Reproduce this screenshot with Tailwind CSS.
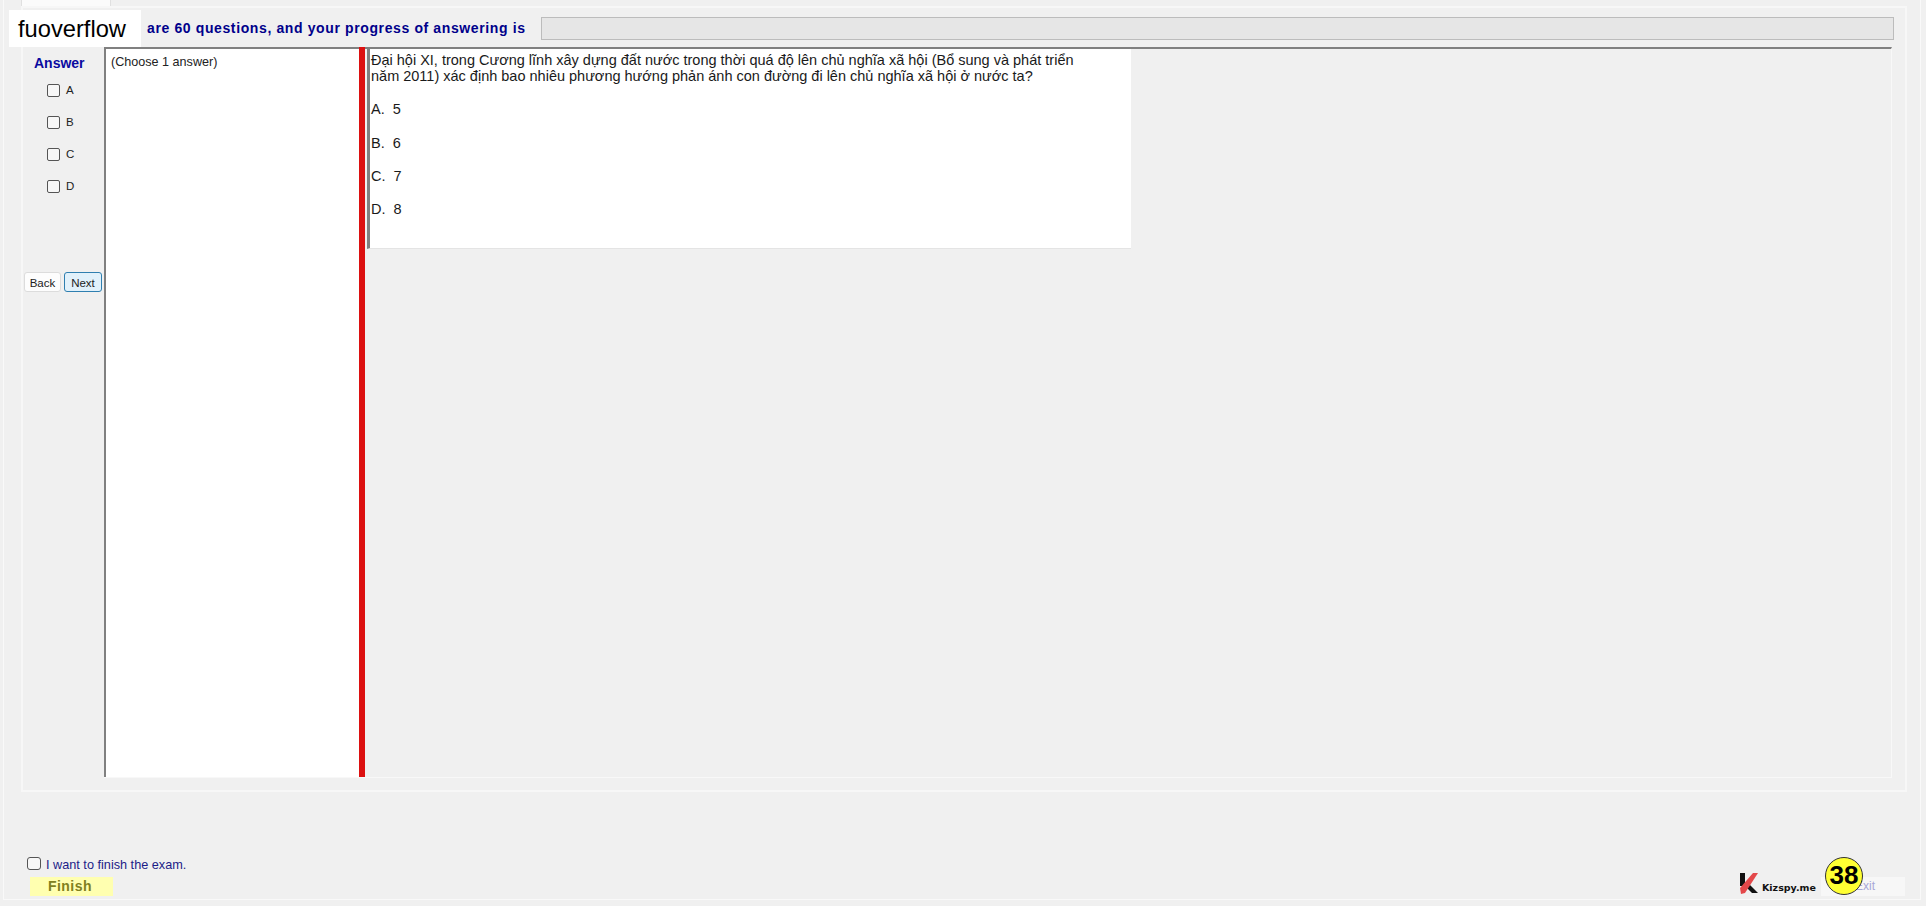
<!DOCTYPE html>
<html lang="vi">
<head>
  <meta charset="UTF-8">
  <title>Exam</title>
  <script src="https://cdn.jsdelivr.net/npm/@tailwindcss/browser@4"></script>
</head>
<body class="bg-[#f0f0f0] font-['Liberation_Sans',Arial,sans-serif] text-black overflow-hidden">
  <div class="relative w-[1926px] h-[906px]">
    <!-- window frame -->
    <div class="ml-[3px] w-[1918px] h-[900px] border-l border-r border-b border-[#f9f9f9] flex flex-col">
      <!-- tab strip -->
      <div class="h-[6px] pl-[17px] flex">
        <div class="w-[90px] h-[6px] bg-[#fbfbfb] border-x border-[#e0e0e0]"></div>
      </div>
      <!-- tab page -->
      <div class="ml-[17px] w-[1886px] h-[786px] border-2 border-[#f7f7f7] flex flex-col pl-[1px] pr-[11px] pt-[9px]">
        <div class="h-[23px] flex items-center pl-[123px] gap-[15px]">
          <span class="w-[379px] text-[14px] leading-[23px] font-bold tracking-[0.62px] text-[#00008b] whitespace-nowrap">are 60 questions, and your progress of answering is</span>
          <div class="flex-1 h-[23px] bg-[#e6e6e6] border border-[#bcbcbc]"></div>
        </div>
        <div class="mt-[7px] mr-[2px] flex h-[731px]">
          <!-- answer column -->
          <div class="w-[80px] shrink-0 flex flex-col">
            <div class="pl-[10px] pt-[8px] h-[37px] text-[14px] font-bold text-[#0a0aa0] leading-[16px]">Answer</div>
            <div class="pl-[23px] flex flex-col gap-[19px] text-[11.5px] leading-[13px] text-[#222]">
              <label class="flex items-center gap-[6px] h-[13px]"><span class="w-[13px] h-[13px] rounded-[2px] border border-[#555] bg-[#f7f7f7]"></span><span class="-mt-[1px]">A</span></label>
              <label class="flex items-center gap-[6px] h-[13px]"><span class="w-[13px] h-[13px] rounded-[2px] border border-[#555] bg-[#f7f7f7]"></span><span class="-mt-[1px]">B</span></label>
              <label class="flex items-center gap-[6px] h-[13px]"><span class="w-[13px] h-[13px] rounded-[2px] border border-[#555] bg-[#f7f7f7]"></span><span class="-mt-[1px]">C</span></label>
              <label class="flex items-center gap-[6px] h-[13px]"><span class="w-[13px] h-[13px] rounded-[2px] border border-[#555] bg-[#f7f7f7]"></span><span class="-mt-[1px]">D</span></label>
            </div>
            <div class="mt-[79px] flex gap-[3px] text-[11.5px] leading-[20px] text-[#222]">
              <button class="w-[37px] h-[20px] bg-[#fdfdfd] border border-[#dcdcdc] rounded-[3px]">Back</button>
              <button class="w-[38px] h-[20px] bg-[#e1f1fb] border border-[#2f7fb0] rounded-[3px]">Next</button>
            </div>
          </div>
          <!-- main area -->
          <div class="flex-1 flex border-t-2 border-r border-b border-t-[#808080] border-r-[#f8f8f8] border-b-[#f8f8f8]">
            <div class="w-[255px] shrink-0 bg-white border-l-2 border-[#808080] pl-[5px] pt-[5px] text-[12.6px] leading-[16px] text-[#222]">(Choose 1 answer)</div>
            <div class="w-[6px] -mt-[2px] shrink-0 bg-[#dc1010]"></div>
            <div class="flex-1 pl-[2px]">
              <div class="w-[764px] h-[200px] bg-white border-l-[3px] border-[#808080] border-b border-b-[#e4e4e4] pl-[1px] pt-[3px] text-[14.5px] leading-[16px] text-[#1a1a1a]">
                <p class="w-[715px]">Đại hội XI, trong Cương lĩnh xây dựng đất nước trong thời quá độ lên chủ nghĩa xã hội (Bổ sung và phát triển năm 2011) xác định bao nhiêu phương hướng phản ánh con đường đi lên chủ nghĩa xã hội ở nước ta?</p>
                <p class="mt-[17px]">A.&nbsp; 5</p>
                <p class="mt-[18px]">B.&nbsp; 6</p>
                <p class="mt-[17px]">C.&nbsp; 7</p>
                <p class="mt-[17px]">D.&nbsp; 8</p>
              </div>
            </div>
          </div>
        </div>
      </div>
      <!-- footer -->
      <div class="flex-1 flex justify-between items-end pl-[23px] pr-[15px] pb-[3px]">
        <div class="flex flex-col">
          <label class="flex items-center gap-[5px] text-[12.7px] leading-[16px] text-[#1c1c88]"><span class="-mt-[3px] w-[14px] h-[13px] rounded-[3px] border border-[#555] bg-[#f7f7f7]"></span>I want to finish the exam.</label>
          <button class="ml-[3px] mt-[4px] w-[83px] h-[19px] bg-[#ffffb0] pr-[3px] text-[14px] leading-[19px] tracking-[0.5px] font-bold text-[#808020]">Finish</button>
        </div>
        <div class="flex items-end">
          <button class="w-[84px] h-[19px] bg-[#f7f7f7] text-[12px] leading-[19px] text-[#a8a8d8] pl-[4px]">Exit</button>
        </div>
      </div>
    </div>

    <!-- overlays -->
    <div class="absolute left-[9px] top-[10px] w-[132px] h-[37px] bg-white pl-[9px] pt-[1px] text-[23.7px] leading-[37px] text-black">fuoverflow</div>
    <div class="absolute left-[1740px] top-[873px] flex items-end gap-[3px]">
      <svg width="19" height="21" viewBox="0 0 19 21"><path d="M0 0h5v13H0z" fill="#111"/><path d="M8 10l10 10h-6L5 13z" fill="#111"/><path d="M1 21 0 15 13 0h5L5 20z" fill="#e4484a"/></svg>
      <span class="text-[9.5px] leading-[13px] font-bold text-[#111] font-['DejaVu_Sans',sans-serif]">Kizspy.me</span>
    </div>
    <div class="absolute left-[1825px] top-[857px] w-[38px] h-[38px] rounded-full bg-[#ffff33] border border-[#333] text-center text-[26px] leading-[35px] font-bold text-black">38</div>
  </div>
</body>
</html>
